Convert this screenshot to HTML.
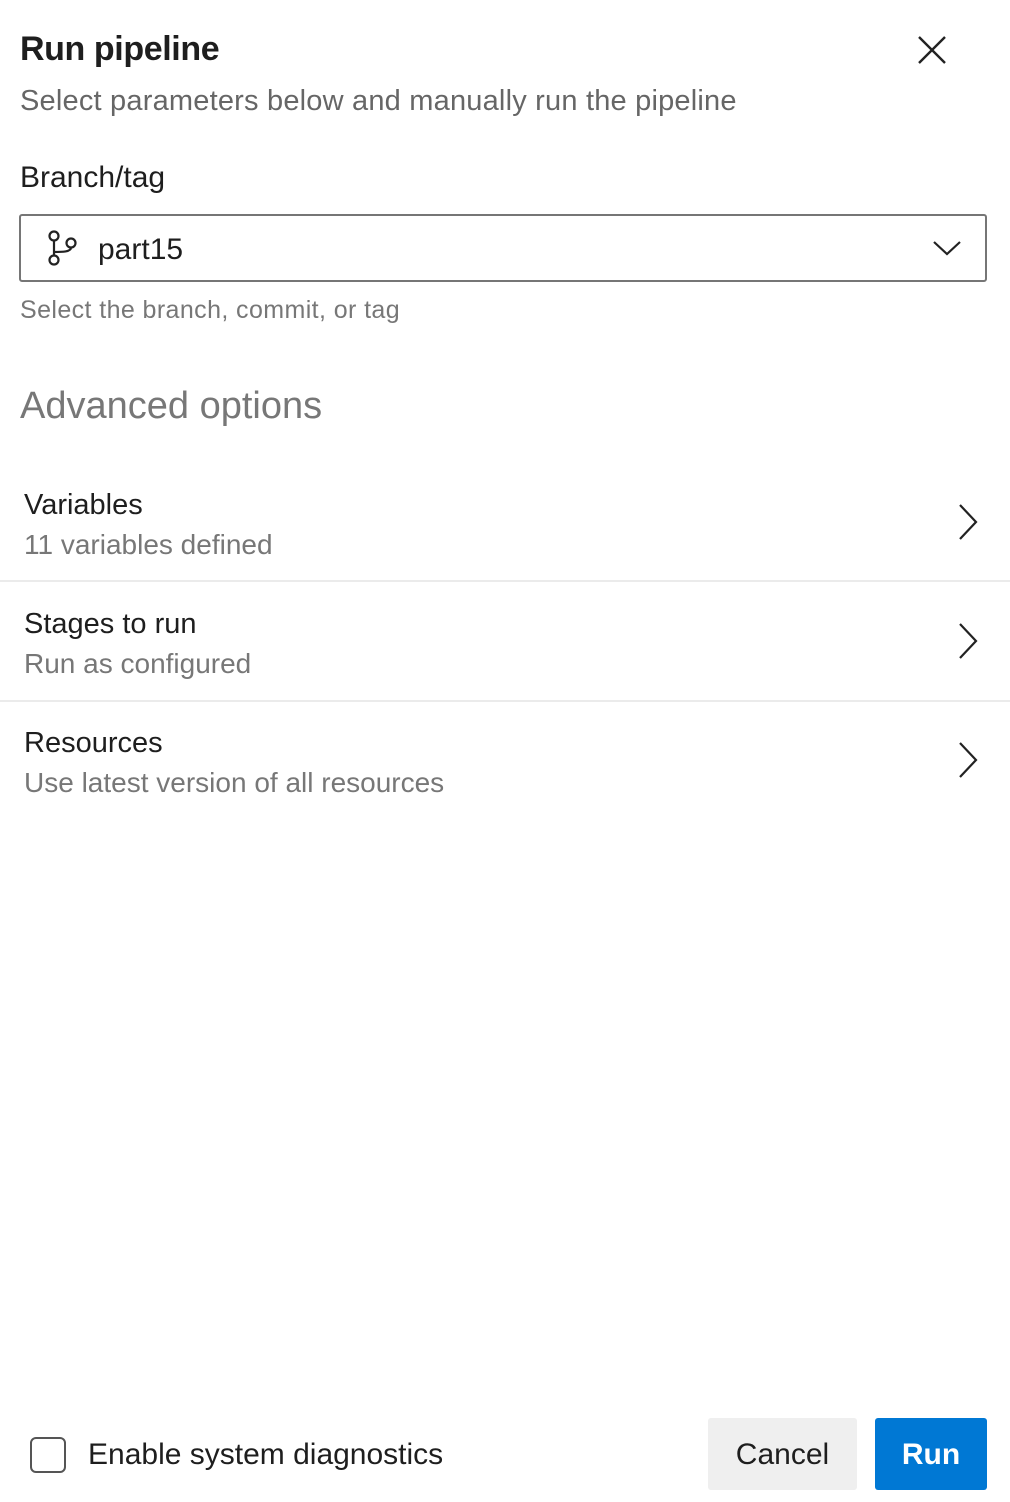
<!DOCTYPE html>
<html><head><style>
body{margin:0;width:1010px;height:1502px;background:#fff;font-family:"Liberation Sans",sans-serif;position:relative;overflow:hidden;color:#1e1e1e}
.a{position:absolute;white-space:nowrap}
.sep{position:absolute;left:0;width:1010px;height:2px;background:#ebebeb}
</style></head><body>
<div class="a" style="left:20px;top:30px;font-size:34px;font-weight:bold;letter-spacing:-0.4px">Run pipeline</div>
<svg class="a" style="left:916px;top:34px" width="32" height="32"><path d="M3 3L29 29M29 3L3 29" stroke="#222" stroke-width="2.4"/></svg>
<div class="a" style="left:20px;top:85px;font-size:29px;color:#666;letter-spacing:0.2px">Select parameters below and manually run the pipeline</div>
<div class="a" style="left:20px;top:161px;font-size:30px">Branch/tag</div>
<div class="a" style="left:19px;top:214px;width:964px;height:64px;border:2px solid #767676;border-radius:3px"></div>
<svg class="a" style="left:46px;top:230px" width="34" height="38" fill="none" stroke="#222" stroke-width="2.2"><circle cx="8" cy="6" r="4.5"/><circle cx="8" cy="30" r="4.5"/><circle cx="25" cy="13" r="4.5"/><path d="M8 10.5V25.5M8 22C16 22 25 22 25 17.5"/></svg>
<div class="a" style="left:98px;top:233px;font-size:30px">part15</div>
<svg class="a" style="left:932px;top:238px" width="30" height="20"><path d="M2 4L15 16L28 4" stroke="#222" stroke-width="2.2" fill="none"/></svg>
<div class="a" style="left:20px;top:296px;font-size:25px;color:#777;letter-spacing:0.4px">Select the branch, commit, or tag</div>
<div class="a" style="left:20px;top:385px;font-size:38px;color:#777">Advanced options</div>

<div class="a" style="left:24px;top:489px;font-size:29px">Variables</div>
<div class="a" style="left:24px;top:529px;font-size:28px;color:#777">11 variables defined</div>
<svg class="a" style="left:956px;top:503px" width="24" height="38"><path d="M4 2L20 19L4 36" stroke="#222" stroke-width="2.2" fill="none"/></svg>
<div class="sep" style="top:580px"></div>

<div class="a" style="left:24px;top:608px;font-size:29px">Stages to run</div>
<div class="a" style="left:24px;top:648px;font-size:28px;color:#777">Run as configured</div>
<svg class="a" style="left:956px;top:622px" width="24" height="38"><path d="M4 2L20 19L4 36" stroke="#222" stroke-width="2.2" fill="none"/></svg>
<div class="sep" style="top:700px"></div>

<div class="a" style="left:24px;top:727px;font-size:29px">Resources</div>
<div class="a" style="left:24px;top:767px;font-size:28px;color:#777">Use latest version of all resources</div>
<svg class="a" style="left:956px;top:741px" width="24" height="38"><path d="M4 2L20 19L4 36" stroke="#222" stroke-width="2.2" fill="none"/></svg>

<div class="a" style="left:30px;top:1437px;width:32px;height:32px;border:2px solid #555;border-radius:6px"></div>
<div class="a" style="left:88px;top:1438px;font-size:30px">Enable system diagnostics</div>
<div class="a" style="left:708px;top:1418px;width:149px;height:72px;background:#efefef;border-radius:3px;font-size:30px;line-height:74px;text-align:center">Cancel</div>
<div class="a" style="left:875px;top:1418px;width:112px;height:72px;background:#0078d4;color:#fff;border-radius:3px;font-size:30px;font-weight:bold;line-height:74px;text-align:center">Run</div>
</body></html>
